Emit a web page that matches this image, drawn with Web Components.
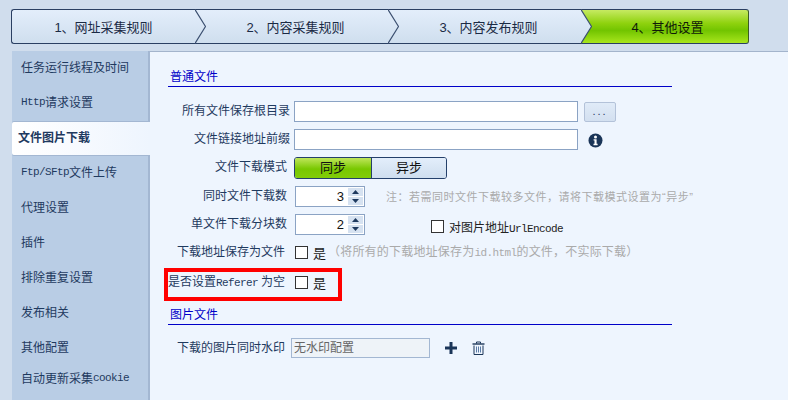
<!DOCTYPE html>
<html lang="zh">
<head>
<meta charset="utf-8">
<title>其他设置</title>
<style>
html, body { margin: 0; height: 100%; overflow: hidden; }
body {
	background: #d0dded;
	font: 12px "Liberation Sans", "Noto Sans CJK SC", sans-serif;
	color: #1f3a5f;
}
.m { font: 11px "Liberation Mono", monospace; letter-spacing: -.6px; }
.note { color: #aaa; white-space: nowrap; flex: none; line-height: 20px; }
</style>
</head>
<body>
<app-frame>
	<step-bar slot="steps">
		<step-item>1、网址采集规则</step-item>
		<step-item>2、内容采集规则</step-item>
		<step-item>3、内容发布规则</step-item>
		<step-item active>4、其他设置</step-item>
	</step-bar>
	<side-nav slot="nav">
		<nav-item>任务运行线程及时间</nav-item>
		<nav-item><span class="m">Http</span>请求设置</nav-item>
		<nav-item active>文件图片下载</nav-item>
		<nav-item after><span class="m">Ftp/SFtp</span>文件上传</nav-item>
		<nav-item>代理设置</nav-item>
		<nav-item>插件</nav-item>
		<nav-item>排除重复设置</nav-item>
		<nav-item>发布相关</nav-item>
		<nav-item>其他配置</nav-item>
		<nav-item last>自动更新采集<span class="m">cookie</span></nav-item>
	</side-nav>

	<section-title>普通文件</section-title>
	<form-row style="margin-top:14px" label="所有文件保存根目录">
		<text-box style="width:284px"></text-box>
		<browse-button></browse-button>
	</form-row>
	<form-row style="margin-top:7px" label="文件链接地址前缀">
		<text-box style="width:284px"></text-box>
		<info-icon></info-icon>
	</form-row>
	<form-row style="margin-top:7px;--label-pad:7px" label="文件下载模式">
		<mode-toggle></mode-toggle>
	</form-row>
	<form-row style="margin-top:7px;--label-pad:7px" label="同时文件下载数">
		<spin-box value="3"></spin-box>
		<span class="note" style="margin:1px 0 0 21px;font-size:11px;letter-spacing:.5px">注：若需同时文件下载较多文件，请将下载模式设置为“异步”</span>
	</form-row>
	<form-row style="margin-top:7px;--label-pad:7px" label="单文件下载分块数">
		<spin-box value="2"></spin-box>
		<check-box style="margin:2px 0 0 66px"><span style="color:#222;font-size:12px">对图片地址<span class="m">UrlEncode</span></span></check-box>
	</form-row>
	<form-row style="margin-top:6px;--label-pad:9px" label="下载地址保存为文件">
		<check-box>是</check-box>
		<span class="note" style="margin-left:2px;letter-spacing:.2px">（将所有的下载地址保存为<span class="m">id.html</span>的文件，不实际下载）</span>
	</form-row>
	<form-row style="margin-top:9px;--label-pad:9px" label="是否设置Referer为空" highlight>
		<check-box>是</check-box>
	</form-row>
	<section-title style="margin-top:12px">图片文件</section-title>
	<form-row style="margin-top:13px;--label-w:123px;--label-pad:6px" label="下载的图片同时水印">
		<text-box style="width:139px" value="无水印配置" muted></text-box>
		<icon-actions></icon-actions>
	</form-row>
</app-frame>

<script>
const define = (name, css, html, extra = {}) => {
	const template = document.createElement('template');
	template.innerHTML = `<style>${css}</style>${html}`;
	customElements.define(name, class extends HTMLElement {
		constructor() {
			super();
			this.attachShadow({mode: 'open'}).appendChild(template.content.cloneNode(true));
		}
		connectedCallback() {
			if (extra.init) extra.init(this, this.shadowRoot);
		}
	});
};

define('app-frame', `
	:host { display: block; height: 400px; box-sizing: border-box; padding-top: 9px; }
	#main { display: flex; margin: 7px 0 0 12px; height: 349px; }
	#content {
		flex: 1;
		min-width: 0;
		box-sizing: border-box;
		background: #eef5fe;
		border-top: 1px solid #a3b4cc;
		padding: 15px 116px 0 18px;
	}
`, `
	<slot name="steps"></slot>
	<div id="main">
		<slot name="nav"></slot>
		<div id="content"><slot></slot></div>
	</div>
`);

define('step-bar', `
	:host {
		display: grid;
		grid-template-columns: 184px 193px 193px 168px;
		height: 35px;
		margin-left: 11px;
		width: 738px;
	}
`, `<slot></slot>`);

define('step-item', `
	:host {
		display: flex;
		position: relative;
		box-sizing: border-box;
		height: 35px;
		align-items: center;
		justify-content: center;
		border-top: 1px solid #2a3f62;
		border-bottom: 1px solid #2a3f62;
		background: linear-gradient(#e3eefb, #cfdeee);
		font-size: 13px;
		color: #1a2a44;
		padding-left: 8px;
	}
	:host(:first-child) { border-left: 1px solid #2a3f62; border-radius: 3px 0 0 3px; padding-left: 0; }
	:host(:last-child) { border-right: 1px solid #3c5a28; border-radius: 0 3px 3px 0; padding-left: 6px; }
	:host([active]) {
		background: linear-gradient(#c6ea62 0%, #8fd20e 40%, #72c400 62%, #a8e61c 100%);
		color: #101a08;
	}
	svg { position: absolute; top: -1px; right: -11px; z-index: 1; }
`, `<slot></slot><svg width="11" height="35" viewBox="0 0 11 35"><path d="M0 .5 10.5 17.5 0 34.5Z" fill="url(#g)"/><path d="M0 .5 10.5 17.5 0 34.5" fill="none" stroke="#3b4f70" stroke-width="1.2"/><defs><linearGradient id="g" x1="0" y1="0" x2="0" y2="1"><stop offset="0" stop-color="#e3eefb"/><stop offset="1" stop-color="#cfdeee"/></linearGradient></defs></svg>`, {
	init(el, root) {
		if (el.hasAttribute('active')) root.querySelector('svg').remove();
	}
});

define('side-nav', `
	:host {
		display: block;
		flex: none;
		width: 138px;
		box-sizing: border-box;
		background: #b9cde5;
		border-right: 2px solid #a3b7d2;
	}
`, `<slot></slot>`);

define('nav-item', `
	:host {
		display: flex;
		align-items: center;
		box-sizing: border-box;
		height: 35px;
		padding-left: 9px;
		color: #1f3a5f;
		white-space: nowrap;
	}
	:host(:first-child) { height: 33px; padding-bottom: 2px; }
	:host([active]) {
		height: 33px;
		margin: 3px -2px 0 0;
		padding: 0 0 4px 6px;
		font-weight: bold;
		background: linear-gradient(90deg, #fff, #eef5fe);
		border-radius: 2px 0 0 2px;
		box-shadow: 0 1px 0 #a3b7d2, 0 -1px 0 #a3b7d2;
		position: relative;
	}
	:host([after]) { height: 34px; padding-bottom: 1px; }
	:host([last]) { height: 27px; }
`, `<slot></slot>`);

define('section-title', `
	:host {
		display: block;
		box-sizing: border-box;
		height: 20px;
		padding-left: 2px;
		line-height: 20px;
		color: #0000c8;
		border-bottom: 1px solid #0000c8;
	}
`, `<slot></slot>`);

define('form-row', `
	:host { display: block; position: relative; }
	#row { display: flex; align-items: flex-start; min-height: 21px; }
	label {
		flex: none;
		box-sizing: border-box;
		width: var(--label-w, 126px);
		padding-right: var(--label-pad, 4px);
		text-align: right;
		line-height: 20px;
		white-space: nowrap;
	}
	#mark {
		position: absolute;
		left: -4px;
		top: -4px;
		width: 178px;
		height: 33px;
		box-sizing: border-box;
		border: 4px solid #ff0000;
	}
	.m { font: 11px "Liberation Mono", monospace; letter-spacing: -.6px; margin-right: 3px; }
`, `<div id="row"><label></label><slot></slot></div>`, {
	init(el, root) {
		const label = root.querySelector('label');
		const parts = el.getAttribute('label').split(/(Referer)/);
		parts.forEach(p => {
			if (p == 'Referer') {
				const s = document.createElement('span');
				s.className = 'm';
				s.textContent = p;
				label.append(s);
			} else {
				label.append(p);
			}
		});
		if (el.hasAttribute('highlight')) {
			const mark = document.createElement('div');
			mark.id = 'mark';
			root.append(mark);
		}
	}
});

define('text-box', `
	:host {
		display: block;
		flex: none;
		box-sizing: border-box;
		height: 21px;
		background: #fff;
		border: 1px solid #8ba3c4;
		line-height: 18px;
		padding-left: 2px;
	}
	:host([muted]) { background: #eef3f8; color: #666; height: 20px; border-color: #a3b7d2; }
`, `<span></span>`, {
	init(el, root) {
		root.querySelector('span').textContent = el.getAttribute('value') || '';
	}
});

define('browse-button', `
	:host {
		display: block;
		flex: none;
		box-sizing: border-box;
		width: 32px;
		height: 20px;
		margin: 1px 0 0 6px;
		border: 1px solid #b3c2d9;
		border-radius: 2px;
		background: linear-gradient(#e0ebf8, #d3e0f0);
		text-align: center;
		line-height: 16px;
		font-size: 11px;
		letter-spacing: 2px;
		color: #1f3a5f;
	}
`, `...`);

define('info-icon', `
	:host { display: block; margin: 4px 0 0 10px; height: 15px; }
`, `<svg width="15" height="15" viewBox="0 0 15 15"><circle cx="7.5" cy="7.5" r="7" fill="#1a3558"/><circle cx="7.5" cy="3.9" r="1.5" fill="#fff"/><path d="M5.6 6.2h3v4.6h1v1.4H5.5v-1.4h1V7.6h-.9Z" fill="#fff"/></svg>`);

define('mode-toggle', `
	:host {
		display: flex;
		flex: none;
		box-sizing: border-box;
		width: 153px;
		height: 22px;
		border: 1px solid #24406a;
		border-radius: 3px;
		overflow: hidden;
		color: #111;
		font-size: 13px;
		line-height: 20px;
		text-align: center;
	}
	#on { width: 76px; background: linear-gradient(#c0e65a, #78c800 55%, #82cc08); border-right: 1px solid #24406a; }
	#off { flex: 1; background: linear-gradient(#e3eefb, #cfdeee); }
`, `<div id="on">同步</div><div id="off">异步</div>`);

define('spin-box', `
	:host {
		display: flex;
		flex: none;
		box-sizing: border-box;
		width: 70px;
		height: 21px;
		margin-left: 1px;
		border: 1px solid #8ba3c4;
		background: #fff;
	}
	#value {
		flex: 1;
		text-align: right;
		padding-right: 4px;
		font-size: 13px;
		line-height: 19px;
		color: #111;
	}
	#arrows { display: flex; flex-direction: column; gap: 1px; width: 15px; margin: 1px 1px 1px 0; }
	#arrows div {
		flex: 1;
		display: flex;
		align-items: center;
		justify-content: center;
		background: #d6e2f1;
	}
`, `<div id="value"></div><div id="arrows">
	<div><svg width="7" height="4"><path d="M3.5 0 7 4H0Z" fill="#1f3a5f"/></svg></div>
	<div><svg width="7" height="4"><path d="M0 0H7L3.5 4Z" fill="#1f3a5f"/></svg></div>
</div>`, {
	init(el, root) {
		root.querySelector('#value').textContent = el.getAttribute('value');
	}
});

define('check-box', `
	:host { display: flex; align-items: center; gap: 5px; height: 20px; margin-left: 1px; color: #1a1a1a; flex: none; }
	i { display: block; width: 13px; height: 13px; box-sizing: border-box; border: 1px solid #333; background: #fff; }
	span { font-size: 13px; white-space: nowrap; }
`, `<i></i><span><slot></slot></span>`);

define('icon-actions', `
	:host { display: flex; align-items: center; gap: 15px; height: 20px; margin-left: 15px; }
	svg { display: block; }
`, `<svg width="12" height="12" viewBox="0 0 12 12"><path d="M4.5 0h3v4.5H12v3H7.5V12h-3V7.5H0v-3h4.5Z" fill="#1a3558"/></svg>
<svg width="13" height="14" viewBox="0 0 13 14" fill="none" stroke="#1a3558"><path d="M.5 3h12" stroke-width="1.4"/><path d="M4.5 2.5V1h4v1.5"/><path d="M2 4.5V13.5H11V4.5"/><path d="M4.5 5.5v6M6.5 5.5v6M8.5 5.5v6" stroke="#5a7ba6"/></svg>`);
</script>
</body>
</html>
